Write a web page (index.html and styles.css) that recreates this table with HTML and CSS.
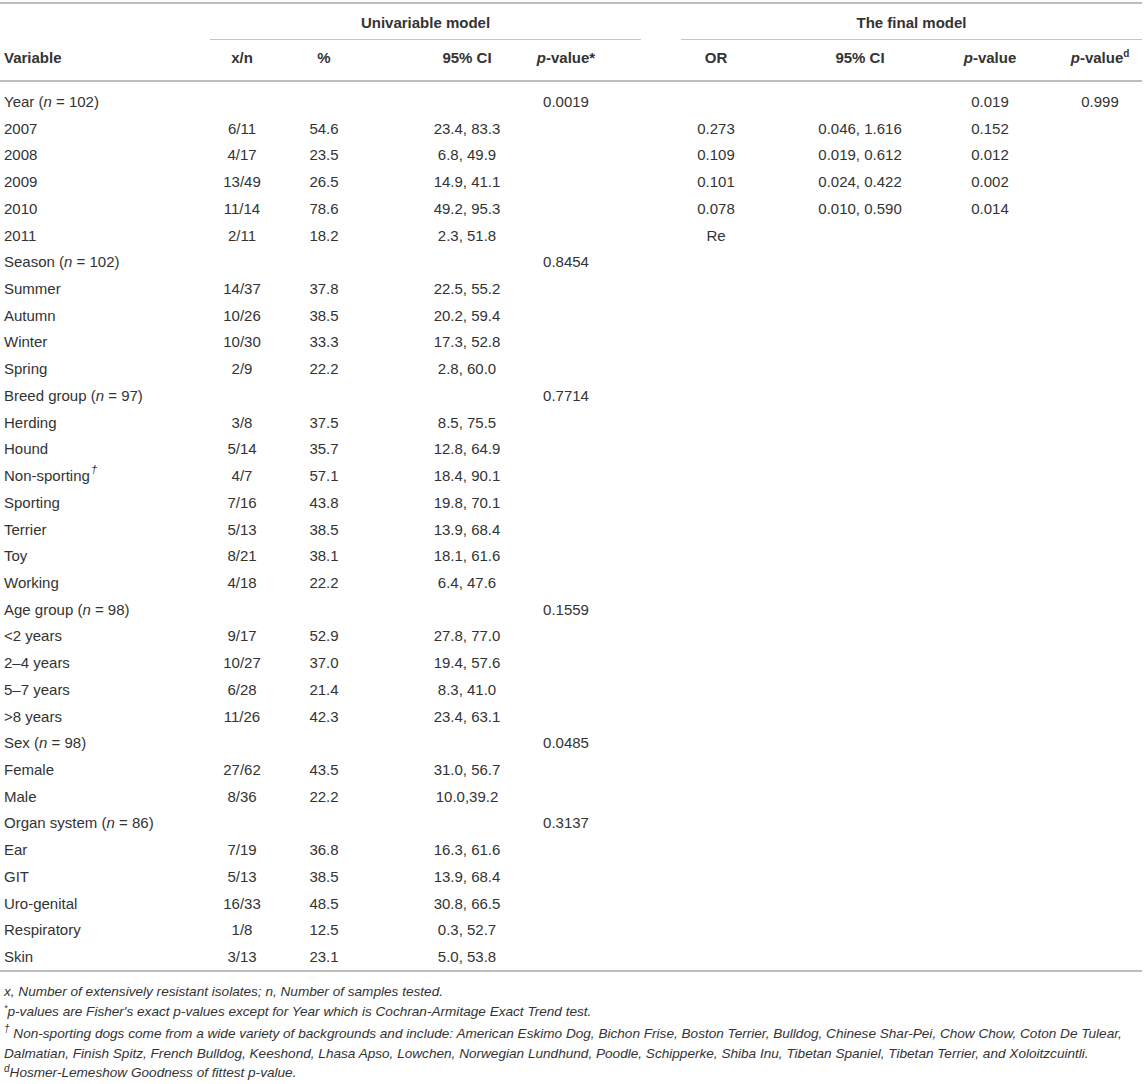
FILE: index.html
```html
<!DOCTYPE html>
<html lang="en">
<head>
<meta charset="utf-8">
<title>Table</title>
<link rel="stylesheet" href="styles.css">
</head>
<body>
<div class="wrap">
<table class="data">
<colgroup>
<col class="w1"><col class="w2"><col class="w3"><col class="w4"><col class="w5"><col class="w6"><col class="w7"><col class="w8"><col class="w9">
</colgroup>
<thead>
<tr class="grp">
<th></th>
<th colspan="4"><div class="group uni">Univariable model</div></th>
<th colspan="4"><div class="group fin">The final model</div></th>
</tr>
<tr class="cols">
<th>Variable</th>
<th>x/n</th>
<th>%</th>
<th>95% CI</th>
<th><i>p</i>-value*</th>
<th>OR</th>
<th>95% CI</th>
<th><i>p</i>-value</th>
<th><i>p</i>-value<sup class="hd">d</sup></th>
</tr>
</thead>
<tbody>
<tr><td>Year (<i>n</i> = 102)</td><td></td><td></td><td></td><td>0.0019</td><td></td><td></td><td>0.019</td><td>0.999</td></tr>
<tr><td>2007</td><td>6/11</td><td>54.6</td><td>23.4, 83.3</td><td></td><td>0.273</td><td>0.046, 1.616</td><td>0.152</td><td></td></tr>
<tr><td>2008</td><td>4/17</td><td>23.5</td><td>6.8, 49.9</td><td></td><td>0.109</td><td>0.019, 0.612</td><td>0.012</td><td></td></tr>
<tr><td>2009</td><td>13/49</td><td>26.5</td><td>14.9, 41.1</td><td></td><td>0.101</td><td>0.024, 0.422</td><td>0.002</td><td></td></tr>
<tr><td>2010</td><td>11/14</td><td>78.6</td><td>49.2, 95.3</td><td></td><td>0.078</td><td>0.010, 0.590</td><td>0.014</td><td></td></tr>
<tr><td>2011</td><td>2/11</td><td>18.2</td><td>2.3, 51.8</td><td></td><td>Re</td><td></td><td></td><td></td></tr>
<tr><td>Season (<i>n</i> = 102)</td><td></td><td></td><td></td><td>0.8454</td><td></td><td></td><td></td><td></td></tr>
<tr><td>Summer</td><td>14/37</td><td>37.8</td><td>22.5, 55.2</td><td></td><td></td><td></td><td></td><td></td></tr>
<tr><td>Autumn</td><td>10/26</td><td>38.5</td><td>20.2, 59.4</td><td></td><td></td><td></td><td></td><td></td></tr>
<tr><td>Winter</td><td>10/30</td><td>33.3</td><td>17.3, 52.8</td><td></td><td></td><td></td><td></td><td></td></tr>
<tr><td>Spring</td><td>2/9</td><td>22.2</td><td>2.8, 60.0</td><td></td><td></td><td></td><td></td><td></td></tr>
<tr><td>Breed group (<i>n</i> = 97)</td><td></td><td></td><td></td><td>0.7714</td><td></td><td></td><td></td><td></td></tr>
<tr><td>Herding</td><td>3/8</td><td>37.5</td><td>8.5, 75.5</td><td></td><td></td><td></td><td></td><td></td></tr>
<tr><td>Hound</td><td>5/14</td><td>35.7</td><td>12.8, 64.9</td><td></td><td></td><td></td><td></td><td></td></tr>
<tr><td>Non-sporting<sup class="dag">†</sup></td><td>4/7</td><td>57.1</td><td>18.4, 90.1</td><td></td><td></td><td></td><td></td><td></td></tr>
<tr><td>Sporting</td><td>7/16</td><td>43.8</td><td>19.8, 70.1</td><td></td><td></td><td></td><td></td><td></td></tr>
<tr><td>Terrier</td><td>5/13</td><td>38.5</td><td>13.9, 68.4</td><td></td><td></td><td></td><td></td><td></td></tr>
<tr><td>Toy</td><td>8/21</td><td>38.1</td><td>18.1, 61.6</td><td></td><td></td><td></td><td></td><td></td></tr>
<tr><td>Working</td><td>4/18</td><td>22.2</td><td>6.4, 47.6</td><td></td><td></td><td></td><td></td><td></td></tr>
<tr><td>Age group (<i>n</i> = 98)</td><td></td><td></td><td></td><td>0.1559</td><td></td><td></td><td></td><td></td></tr>
<tr><td>&lt;2 years</td><td>9/17</td><td>52.9</td><td>27.8, 77.0</td><td></td><td></td><td></td><td></td><td></td></tr>
<tr><td>2–4 years</td><td>10/27</td><td>37.0</td><td>19.4, 57.6</td><td></td><td></td><td></td><td></td><td></td></tr>
<tr><td>5–7 years</td><td>6/28</td><td>21.4</td><td>8.3, 41.0</td><td></td><td></td><td></td><td></td><td></td></tr>
<tr><td>&gt;8 years</td><td>11/26</td><td>42.3</td><td>23.4, 63.1</td><td></td><td></td><td></td><td></td><td></td></tr>
<tr><td>Sex (<i>n</i> = 98)</td><td></td><td></td><td></td><td>0.0485</td><td></td><td></td><td></td><td></td></tr>
<tr><td>Female</td><td>27/62</td><td>43.5</td><td>31.0, 56.7</td><td></td><td></td><td></td><td></td><td></td></tr>
<tr><td>Male</td><td>8/36</td><td>22.2</td><td>10.0,39.2</td><td></td><td></td><td></td><td></td><td></td></tr>
<tr><td>Organ system (<i>n</i> = 86)</td><td></td><td></td><td></td><td>0.3137</td><td></td><td></td><td></td><td></td></tr>
<tr><td>Ear</td><td>7/19</td><td>36.8</td><td>16.3, 61.6</td><td></td><td></td><td></td><td></td><td></td></tr>
<tr><td>GIT</td><td>5/13</td><td>38.5</td><td>13.9, 68.4</td><td></td><td></td><td></td><td></td><td></td></tr>
<tr><td>Uro-genital</td><td>16/33</td><td>48.5</td><td>30.8, 66.5</td><td></td><td></td><td></td><td></td><td></td></tr>
<tr><td>Respiratory</td><td>1/8</td><td>12.5</td><td>0.3, 52.7</td><td></td><td></td><td></td><td></td><td></td></tr>
<tr><td>Skin</td><td>3/13</td><td>23.1</td><td>5.0, 53.8</td><td></td><td></td><td></td><td></td><td></td></tr>
</tbody>
</table>
<div class="notes">
<p>x, Number of extensively resistant isolates; n, Number of samples tested.</p>
<p><sup class="ast">*</sup>p-values are Fisher's exact p-values except for Year which is Cochran-Armitage Exact Trend test.</p>
<p class="dagnote"><sup class="ndag">†</sup> Non-sporting dogs come from a wide variety of backgrounds and include: American Eskimo Dog, Bichon Frise, Boston Terrier, Bulldog, Chinese Shar-Pei, Chow Chow, Coton De Tulear, Dalmatian, Finish Spitz, French Bulldog, Keeshond, Lhasa Apso, Lowchen, Norwegian Lundhund, Poodle, Schipperke, Shiba Inu, Tibetan Spaniel, Tibetan Terrier, and Xoloitzcuintli.</p>
<p><sup class="nd">d</sup>Hosmer-Lemeshow Goodness of fittest p-value.</p>
</div>
</div>
</body>
</html>
```

FILE: styles.css
```css
html, body {
  margin: 0;
  padding: 0;
  background: #ffffff;
}

body {
  font-family: "Liberation Sans", Arial, Helvetica, sans-serif;
  color: #333333;
}

.wrap {
  width: 1142px;
  padding-top: 2px;
}

.data {
  width: 1142px;
  table-layout: fixed;
  border-collapse: separate;
  border-spacing: 0;
  border-top: 2px solid #bdbdbd;
  font-size: 15px;
}

.w1 { width: 201px; }
.w2 { width: 82px; }
.w3 { width: 82px; }
.w4 { width: 157px; }
.w5 { width: 119px; }
.w6 { width: 120px; }
.w7 { width: 159px; }
.w8 { width: 120px; }
.w9 { width: 102px; }

.data th,
.data td {
  padding: 0;
  text-align: center;
  white-space: nowrap;
  line-height: 18px;
}

.grp th {
  padding: 0;
  vertical-align: bottom;
}

.group {
  padding: 10px 0 7px;
  line-height: 18px;
  border-bottom: 1px solid #c6c6c6;
  font-weight: bold;
  text-align: center;
}

.uni { margin-left: 9px; }
.fin { margin-left: 40px; }

.cols th {
  padding-top: 9px;
  padding-bottom: 13px;
  border-bottom: 2px solid #bdbdbd;
  font-weight: bold;
}

.data tbody td {
  padding-top: 4.36px;
  padding-bottom: 4.36px;
}

.data tbody tr:first-child td {
  padding-top: 11px;
}

.data tbody tr:last-child td {
  border-bottom: 2px solid #bdbdbd;
}

.cols th:nth-child(1),
.data tbody td:nth-child(1) {
  text-align: left;
  padding-left: 4px;
}

.cols th:nth-child(4),
.data tbody td:nth-child(4) { padding-left: 47px; }
.cols th:nth-child(5),
.data tbody td:nth-child(5) { padding-right: 31px; }
.cols th:nth-child(6),
.data tbody td:nth-child(6) { padding-left: 30px; }
.cols th:nth-child(7),
.data tbody td:nth-child(7) { padding-left: 39px; }
.cols th:nth-child(8),
.data tbody td:nth-child(8) { padding-left: 20px; }
.cols th:nth-child(9),
.data tbody td:nth-child(9) { padding-left: 18px; }

sup {
  line-height: 0;
}

.hd {
  font-size: 10px;
  vertical-align: 6px;
  font-weight: bold;
}

.dag {
  font-size: 11px;
  font-style: italic;
  vertical-align: 8px;
  margin-left: 1px;
}

.notes {
  padding: 10px 0 0 4px;
  font-size: 13.6px;
  font-style: italic;
  line-height: 19.5px;
}

.notes p {
  margin: 0;
}

.ast {
  font-size: 9px;
  vertical-align: 5px;
}

.dagnote {
  padding-top: 3px;
}

.ndag {
  font-size: 10px;
  vertical-align: 6px;
}

.nd {
  font-size: 10px;
  vertical-align: 5px;
}
```
